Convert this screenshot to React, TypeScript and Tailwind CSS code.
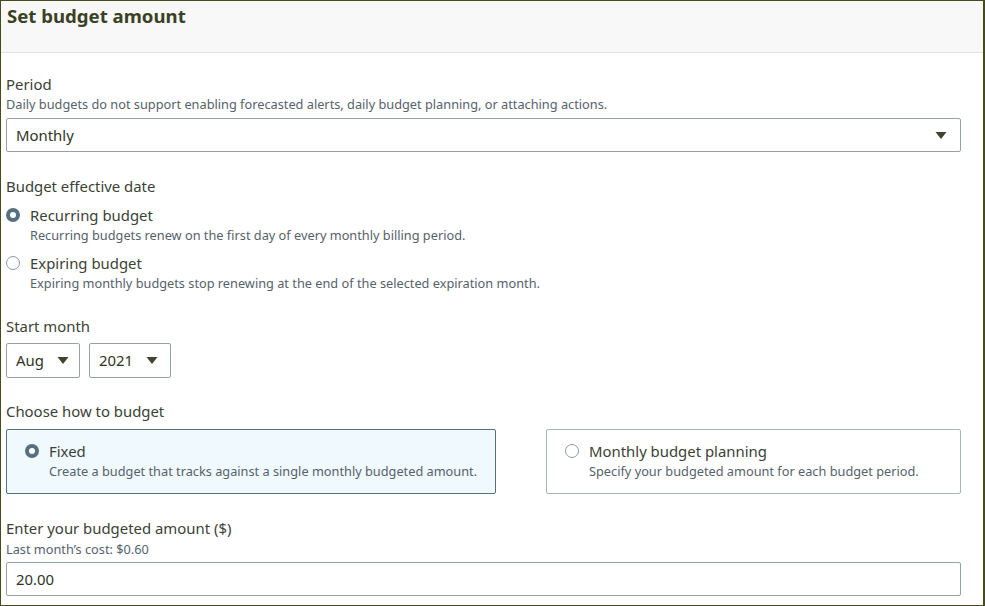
import React from 'react'

const label = 'text-[14.9px] leading-[20px] text-[#3b4236]'
const desc = 'text-[12.75px] leading-[20px] text-[#56626b]'
const value = 'text-[14.9px] text-[#2f3524]'

function Caret() {
  return (
    <svg width="12" height="9" viewBox="0 0 12 9" className="shrink-0">
      <path d="M0.5 1 H11.5 L6 8 Z" fill="#3d4530" />
    </svg>
  )
}

function Radio({ checked }: { checked?: boolean }) {
  return checked ? (
    <span className="mt-[3px] box-border h-[14px] w-[14px] shrink-0 rounded-full border-[4px] border-[#56707f] bg-white" />
  ) : (
    <span className="mt-[3px] box-border h-[14px] w-[14px] shrink-0 rounded-full border border-[#8d999f] bg-white" />
  )
}

function RadioOption({ checked, title, text }: { checked?: boolean; title: string; text: string }) {
  return (
    <div className="flex gap-[10px]">
      <Radio checked={checked} />
      <div className="flex flex-col">
        <span className={label}>{title}</span>
        <span className={desc}>{text}</span>
      </div>
    </div>
  )
}

export default function App() {
  return (
    <div
      className="box-border h-[606px] w-[985px] overflow-hidden border-t border-l border-b border-r-2 border-[#474a1c] bg-white"
      style={{ fontFamily: '"Noto Sans", sans-serif' }}
    >
      <div className="h-[52px] border-b border-[#e1e3e3] bg-[#f8f8f8] px-[6px] pt-[2px]">
        <h1 className="text-[18.6px] font-bold leading-[26px] text-[#3b4125]">Set budget amount</h1>
      </div>

      <div className="flex flex-col pl-[5px] pr-[22px]">
        <div className="mt-[21px] flex flex-col">
          <span className={label}>Period</span>
          <span className={desc}>
            Daily budgets do not support enabling forecasted alerts, daily budget planning, or attaching actions.
          </span>
          <div className="mt-[4px] flex h-[34px] items-center justify-between rounded-[2px] border border-[#96a3a5] pl-[9px] pr-[13px]">
            <span className={value}>Monthly</span>
            <Caret />
          </div>
        </div>

        <div className="mt-[24px] flex flex-col">
          <span className={label}>Budget effective date</span>
          <div className="mt-[9px] flex flex-col gap-[8px]">
            <RadioOption
              checked
              title="Recurring budget"
              text="Recurring budgets renew on the first day of every monthly billing period."
            />
            <RadioOption
              title="Expiring budget"
              text="Expiring monthly budgets stop renewing at the end of the selected expiration month."
            />
          </div>
        </div>

        <div className="mt-[23px] flex flex-col">
          <span className={label}>Start month</span>
          <div className="mt-[7px] flex gap-[9px]">
            <div className="flex h-[35px] w-[74px] items-center gap-[13px] rounded-[2px] border border-[#96a3a5] pl-[9px]">
              <span className={value}>Aug</span>
              <Caret />
            </div>
            <div className="flex h-[35px] w-[82px] items-center gap-[13px] rounded-[2px] border border-[#96a3a5] pl-[9px]">
              <span className={value}>2021</span>
              <Caret />
            </div>
          </div>
        </div>

        <div className="mt-[23px] flex flex-col">
          <span className={label}>Choose how to budget</span>
          <div className="mt-[8px] flex gap-[50px]">
            <div className="h-[65px] w-[490px] shrink-0 rounded-[2px] border border-[#577080] bg-[#f0f9fe] pl-[18px] pt-[11px]">
              <RadioOption checked title="Fixed" text="Create a budget that tracks against a single monthly budgeted amount." />
            </div>
            <div className="h-[65px] w-[415px] shrink-0 rounded-[2px] border border-[#a9b4b6] bg-white pl-[18px] pt-[11px]">
              <RadioOption title="Monthly budget planning" text="Specify your budgeted amount for each budget period." />
            </div>
          </div>
        </div>

        <div className="mt-[24px] flex flex-col">
          <span className={label}>Enter your budgeted amount ($)</span>
          <span className={`${desc} mt-[1px]`}>Last month’s cost: $0.60</span>
          <div className="mt-[3px] flex h-[34px] items-center rounded-[2px] border border-[#96a3a5] pl-[9px]">
            <span className={value}>20.00</span>
          </div>
        </div>
      </div>
    </div>
  )
}
